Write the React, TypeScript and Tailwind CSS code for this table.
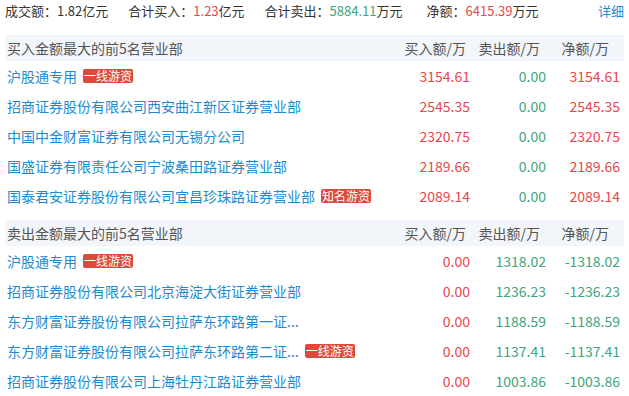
import React from "react";

type Row = { name: string; tag?: string; buy: string; sell: string; net: string };

const buyRows: Row[] = [
  { name: "沪股通专用", tag: "一线游资", buy: "3154.61", sell: "0.00", net: "3154.61" },
  { name: "招商证券股份有限公司西安曲江新区证券营业部", buy: "2545.35", sell: "0.00", net: "2545.35" },
  { name: "中国中金财富证券有限公司无锡分公司", buy: "2320.75", sell: "0.00", net: "2320.75" },
  { name: "国盛证券有限责任公司宁波桑田路证券营业部", buy: "2189.66", sell: "0.00", net: "2189.66" },
  { name: "国泰君安证券股份有限公司宜昌珍珠路证券营业部", tag: "知名游资", buy: "2089.14", sell: "0.00", net: "2089.14" },
];

const sellRows: Row[] = [
  { name: "沪股通专用", tag: "一线游资", buy: "0.00", sell: "1318.02", net: "-1318.02" },
  { name: "招商证券股份有限公司北京海淀大街证券营业部", buy: "0.00", sell: "1236.23", net: "-1236.23" },
  { name: "东方财富证券股份有限公司拉萨东环路第一证...", buy: "0.00", sell: "1188.59", net: "-1188.59" },
  { name: "东方财富证券股份有限公司拉萨东环路第二证...", tag: "一线游资", buy: "0.00", sell: "1137.41", net: "-1137.41" },
  { name: "招商证券股份有限公司上海牡丹江路证券营业部", buy: "0.00", sell: "1003.86", net: "-1003.86" },
];

const RED = "text-[#e8474c]";
const GREEN = "text-[#3ea57c]";

function Section({ title, rows, sell }: { title: string; rows: Row[]; sell?: boolean }) {
  return (
    <div>
      <div className="flex h-[26px] items-center bg-[#f2f6fa] text-[14px] text-[#555555]">
        <div className="flex-1 pl-[2px]">{title}</div>
        <div className="w-[75px] pr-[4px] text-right">买入额/万</div>
        <div className="w-[76px] pr-[6px] text-right">卖出额/万</div>
        <div className="w-[74px] pr-[11px] text-right">净额/万</div>
        <div className="w-[4px]" />
      </div>
      {rows.map((r, i) => (
        <div key={i} className="flex h-[30px] items-center text-[14px]">
          <div className="flex flex-1 items-center pl-[2px] min-w-0">
            <span className="whitespace-nowrap text-[#1d8bd1]">{r.name}</span>
            {r.tag && (
              <span className="ml-[6px] flex h-[14px] items-center rounded-[2px] bg-[#dc4a39] px-[1px] text-[12px] leading-[14px] text-white whitespace-nowrap">
                {r.tag}
              </span>
            )}
          </div>
          <div className={`w-[75px] text-right ${RED}`}>{r.buy}</div>
          <div className={`w-[76px] text-right ${GREEN}`}>{r.sell}</div>
          <div className={`w-[74px] text-right ${sell ? GREEN : RED}`}>{r.net}</div>
          <div className="w-[4px]" />
        </div>
      ))}
    </div>
  );
}

export default function App() {
  return (
    <div
      className="w-[629px] h-[396px] overflow-hidden bg-white px-[5px] text-[#333333]"
      style={{ fontFamily: '"Noto Sans CJK SC", "Noto Sans", sans-serif' }}
    >
      <div className="flex h-[22px] items-center text-[13px] text-[#333333]">
        <span>
          成交额：<span>1.82</span>亿元
        </span>
        <span className="ml-[20px]">
          合计买入：<span className={RED}>1.23</span>亿元
        </span>
        <span className="ml-[20px]">
          合计卖出：<span className={GREEN}>5884.11</span>万元
        </span>
        <span className="ml-[24px]">
          净额：<span className={RED}>6415.39</span>万元
        </span>
        <span className="ml-auto text-[#1d8bd1]">详细</span>
      </div>
      <div className="mt-[13px]">
        <Section title="买入金额最大的前5名营业部" rows={buyRows} />
      </div>
      <div className="mt-[9px]">
        <Section title="卖出金额最大的前5名营业部" rows={sellRows} sell />
      </div>
    </div>
  );
}
